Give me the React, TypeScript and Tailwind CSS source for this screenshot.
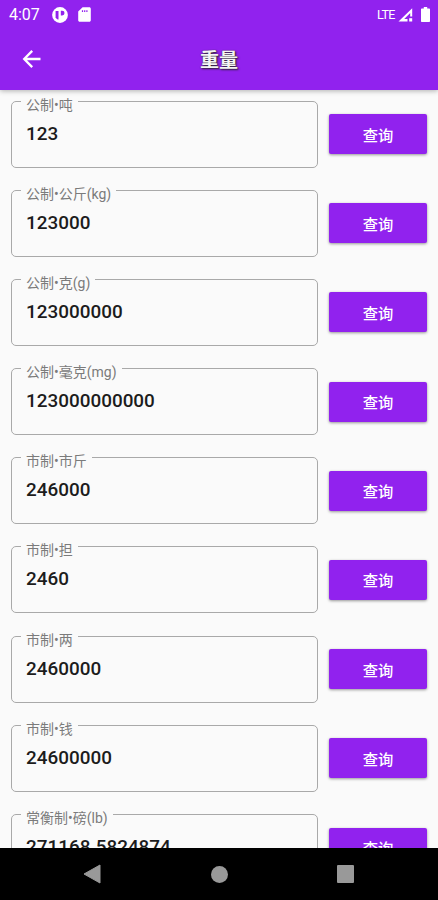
type Unit = {
	label: string;
	value: string;
};

const units: Unit[] = [
	{ label: "公制•吨", value: "123" },
	{ label: "公制•公斤(kg)", value: "123000" },
	{ label: "公制•克(g)", value: "123000000" },
	{ label: "公制•毫克(mg)", value: "123000000000" },
	{ label: "市制•市斤", value: "246000" },
	{ label: "市制•担", value: "2460" },
	{ label: "市制•两", value: "2460000" },
	{ label: "市制•钱", value: "24600000" },
	{ label: "常衡制•磅(lb)", value: "271168.5824874" },
];

function StatusBar() {
	return (
		<div className="flex h-[29px] items-center justify-between pl-[9px] pr-[8px] text-white">
			<div className="flex items-center">
				<span className="w-[43px] text-[16px] leading-[29px]">4:07</span>
				<svg className="h-4 w-4" viewBox="0 0 16 16">
					<circle cx="8" cy="8" r="7.9" fill="#fff" />
					<path d="M3.6 4h2.9v8.400H5.800a5 5 0 0 1-2.200-2z" fill="#9122ee" />
					<path d="M8.800 3.800h1.400a2.300 2.300 0 0 1 0 4.600H8.800z" fill="#9122ee" />
				</svg>
				<svg className="ml-[10px] h-[15px] w-[13px]" viewBox="0 0 13 15">
					<path
						d="M4.600.2h6.600c1 0 1.600.6 1.600 1.500v11.600c0 .9-.6 1.500-1.600 1.500H1.800c-1 0-1.600-.6-1.600-1.500V4.600z"
						fill="#fff"
					/>
					<path d="M4.500 3.300v1.600M6.700 3.300v1.600M8.900 3.300v1.600" stroke="#9122ee" strokeWidth="1.200" />
				</svg>
			</div>
			<div className="flex items-center">
				<span className="w-[21px] text-[12.500px] leading-[28px] tracking-[-0.6px]">LTE</span>
				<svg className="h-[14px] w-[15px]" viewBox="0 0 15 14">
					<path d="M.5 13.500 14.200.2V8.500h-2V5L6.200 11h3.300v2.500z" fill="#fff" />
					<path d="M11.200 10.200h3v3.300h-3z" fill="#fff" />
				</svg>
				<svg className="ml-[8px] h-[15px] w-[9px]" viewBox="0 0 9 15">
					<path
						d="M2.800 0h3.400v1.500H8c.6 0 1 .4 1 1V14c0 .6-.4 1-1 1H1c-.6 0-1-.4-1-1V2.500c0-.6.4-1 1-1h1.800z"
						fill="#fff"
					/>
				</svg>
			</div>
		</div>
	);
}

function AppBar() {
	return (
		<div className="grid h-[60.500px] grid-cols-[60px_1fr_60px] items-center text-white">
			<button className="flex h-full items-center pl-[22px]">
				<svg className="h-[20px] w-[20px]" viewBox="0 0 20 20" fill="none" stroke="#fff" strokeWidth="2.300">
					<path d="M10.200 1.900 2.200 10l8 8.100M2.200 10H18.500" />
				</svg>
			</button>
			<h1 className="pt-[4px] text-center text-[19px] font-bold leading-[28px] text-[#f4f4f4] [text-shadow:1px_1px_2px_#222,0_0_1px_#444]">
				重量
			</h1>
		</div>
	);
}

function UnitRow({ label, value }: Unit) {
	return (
		<div className="flex h-[67px] items-center justify-between">
			<fieldset className="h-[67px] w-[307px] rounded-[5px] border border-[#a9a9a9] pl-[9px]">
				<legend className="h-px whitespace-nowrap px-[5px] text-[14px] leading-[9px] text-[#7b7b7b]">
					{label}
				</legend>
				<div className="pl-[5px] pt-[20px] text-[18.900px] font-medium leading-[24px] text-[#1c1c1c]">
					{value}
				</div>
			</fieldset>
			<button className="h-[40px] w-[98px] rounded-[2px] bg-[#9122ee] pt-[4px] text-[15.300px] font-medium text-white shadow-[0_1px_3px_rgba(0,0,0,0.4)]">
				查询
			</button>
		</div>
	);
}

function NavBar() {
	return (
		<div className="flex h-[52px] shrink-0 items-center justify-between bg-black px-[83px]">
			<svg className="h-[20px] w-[18px]" viewBox="0 0 18 20">
				<path d="M17 1v18L1 10z" fill="#999" stroke="#999" strokeLinejoin="round" />
			</svg>
			<div className="h-[17px] w-[17px] rounded-full bg-[#999]" />
			<div className="mr-px h-[18px] w-[17px] rounded-[1px] bg-[#999]" />
		</div>
	);
}

export default function App() {
	return (
		<div className="flex h-[900px] w-[438px] flex-col overflow-hidden bg-[#fafafa] font-['Roboto','Noto_Sans_CJK_SC',sans-serif]">
			<header className="z-10 shrink-0 bg-[#9122ee] shadow-[0_1px_5px_rgba(0,0,0,0.3)]">
				<StatusBar />
				<AppBar />
			</header>
			<main className="flex min-h-0 flex-1 flex-col gap-[22.200px] overflow-hidden px-[11px] pt-[11px]">
				{units.map((unit) => (
					<UnitRow key={unit.label} {...unit} />
				))}
			</main>
			<NavBar />
		</div>
	);
}
